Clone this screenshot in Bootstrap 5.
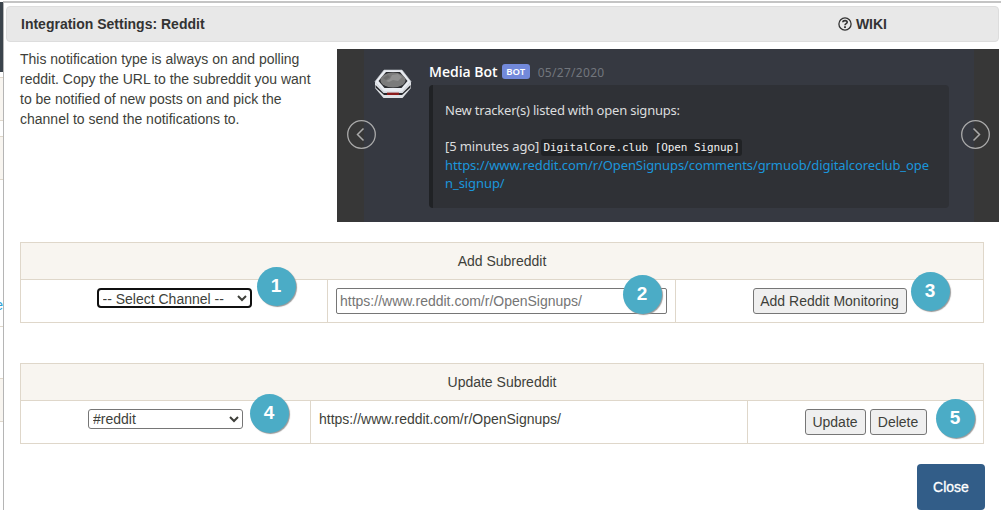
<!DOCTYPE html>
<html lang="en">
<head>
<meta charset="utf-8">
<title>Integration Settings: Reddit</title>
<link rel="stylesheet" href="https://cdn.jsdelivr.net/npm/bootstrap@5.3.0/dist/css/bootstrap.min.css">
<style>
body{font:14px/20px "Liberation Sans",Arial,sans-serif;color:#3e3f3a;height:510px;overflow:hidden;background:#fff}
.behind{width:3px;flex:none;overflow:hidden;padding-top:2px}
.behind i{display:block;border-top:1px solid #dfd7ca}
.behind .nav-edge{height:70px;margin-bottom:5px;background:#3b444c;border:0}
.tint{background:#f8f5f0}
.peek{direction:rtl;color:#2a9fd6;height:20px;white-space:nowrap}
.dialog-pane{border-left:1px solid #b5b5b5;border-top:2px solid #c4c4c4;margin-top:1px;min-width:0}
.title-bar{margin:3px 2px 0;height:36px;border:1px solid #ddd;border-radius:4px;background:#e8e8e8;padding:0 14px;font-weight:700;color:#333}
.wiki-link{margin-right:97px;gap:4px}
.intro{width:317px;flex:none;letter-spacing:0}
.upper{height:173px;margin:7px 2px 0 16px}
.slides{background:#373737;height:173px}
.arrow-col{position:absolute;top:70px;width:31px;height:31px}
.chat{margin:0 25px 0 27px;background:#363941;height:173px;padding:14px 25px 14px 10px;font-family:"Noto Sans","Open Sans",sans-serif;font-size:13px;line-height:18px;color:#dcddde}
.avatar{width:38px;height:30px;margin:6px 17px 0 0;flex:none}
.who{height:18px;margin-bottom:4px}
.bot-name{color:#fff;font:600 14px/18px "Open Sans",sans-serif}
.bot-tag{background:#7289da;color:#fff;font-size:9.5px;font-weight:600;width:28px;height:15px;line-height:15px;border-radius:3px;text-align:center;margin:0 8px 2px 4px}
.when{font-size:12px;color:#72767d;letter-spacing:.3px;padding-top:2px}
.quote-box{background:#2f3136;border-left:4px solid #202225;border-radius:4px;height:123px;padding:16px 0 0 12px;white-space:nowrap;letter-spacing:-.2px}
.quote-box .ago{letter-spacing:-.1px}
.quote-box code{font:11px/16px "DejaVu Sans Mono",monospace;color:#f0f0f0;background:#202225;border-radius:3px;padding:2px;letter-spacing:-.08px;margin-left:-1px}
.quote-box a{color:#1b96db;text-decoration:none;letter-spacing:-.08px}
.grid-table{width:964px;margin:0 0 40px 16px;table-layout:fixed;border-collapse:collapse;color:inherit}
.grid-table>tbody>tr>td,.grid-table>thead>tr>th{border:1px solid #dfd7ca;padding:8px;font-weight:400;position:relative;vertical-align:top}
.grid-table th{background:#f8f5f0!important;height:37px;text-align:center;color:inherit}
.grid-table td{height:43px;color:inherit}
.picker{width:155px;height:20px;border:1px solid #767676;border-radius:3px;background:#fff;color:#3e3f3a;padding:0;display:block;font-size:14px;line-height:18px}
.picker.current{width:155px;border:2px solid #101010;border-radius:4px}
.url-box{width:331px;height:26px;border:1px solid #767676;border-radius:2px;padding:1px 3px;display:block}
.url-box::placeholder{color:#757575;opacity:1}
.plain-btn{height:26px;border:1px solid #767676;border-radius:3px;background:#efefef;color:#3e3f3a;padding:0;line-height:22px}
.step{position:absolute;width:39px;height:39px;border-radius:50%;background:#4bacc6;color:#fff;font-weight:700;font-size:19px;line-height:38px;text-align:center;box-shadow:1px 1px 1px #999;z-index:2;margin-left:-.5px;margin-top:-.5px}
.close-btn{width:68px;height:46px;margin:-20px 16px 0 0;border:0;border-radius:4px;background:#325d88;color:#fff;font-size:14px;font-weight:400;-webkit-text-stroke:.3px #fff}
</style>
</head>
<body>
<div class="d-flex h-100">
  <div class="behind">
    <i class="nav-edge"></i>
    <i class="tint" style="height:43px"></i><i style="height:16px"></i><i class="tint" style="height:43px"></i>
    <i style="height:147px;padding-top:115px"><span class="peek d-block fst-normal">e</span></i>
    <i style="height:52px"></i><i class="tint" style="height:43px"></i><i></i>
  </div>
  <main class="dialog-pane flex-grow-1">
    <header class="title-bar d-flex align-items-center justify-content-between">
      <span>Integration Settings: Reddit</span>
      <span class="wiki-link d-flex align-items-center">
        <svg width="14" height="14" viewBox="0 0 14 14" fill="none" stroke="#333"><circle cx="7" cy="7" r="6.1" stroke-width="1.3"/><path d="M4.8 5.3C5 3 9.2 3 9.2 5.3C9.2 6.7 7 6.6 7 8.3" stroke-width="1.6"/><path d="M7 9.3V11" stroke-width="1.8"/></svg>
        WIKI</span>
    </header>
    <section class="upper d-flex">
      <p class="intro mb-0 text-nowrap">This notification type is always on and polling<br>reddit. Copy the URL to the subreddit you want<br>to be notified of new posts on and pick the<br>channel to send the notifications to.</p>
      <div class="slides position-relative flex-grow-1">
        <svg class="arrow-col" style="left:9px" viewBox="0 0 31 31" fill="none" stroke="#aaa" stroke-width="1.3"><circle cx="15.5" cy="15.5" r="13.8"/><path d="M17.5 9.5L11.5 15.5L17.5 21.5" stroke-width="1.5"/></svg>
        <div class="chat d-flex">
          <svg class="avatar" viewBox="0 0 38 30"><path d="M1 13v6l8.500 10h19L37 19v-6z" fill="#dfe2e6"/><path d="M1.500 16l8 8h19l8-8v2.500L28 26H10l-8.500-7.500z" fill="#28292d"/><path d="M13 23.500h12v2.500H13z" fill="#8c1b1b"/><path d="M10 1h18l9 11.500L28 23H10L1 12.500z" fill="#e9ecf1" stroke="#c3c6cd" stroke-width=".6"/><path d="M12 3h14l7.500 9-6 7h-17l-6-7z" fill="#2b2c30"/><ellipse cx="19" cy="11" rx="12.500" ry="7.600" fill="#7b7b7b"/><path d="M18 6l6-1 4 3-4 4-5-1-4 2-3-1 4-2z" fill="#919191"/><path d="M9 9l5-3 2 2-4 3z" fill="#6c6c6c"/></svg>
          <div class="flex-grow-1">
            <div class="who d-flex align-items-center"><span class="bot-name">Media Bot</span><span class="bot-tag">BOT</span><span class="when">05/27/2020</span></div>
            <div class="quote-box">New tracker(s) listed with open signups:<br><br><span class="ago">[5 minutes ago]</span> <code>DigitalCore.club [Open Signup]</code><br><a href="#">https://www.reddit.com/r/OpenSignups/comments/grmuob/digitalcoreclub_ope<br>n_signup/</a></div>
          </div>
        </div>
        <svg class="arrow-col" style="right:8px" viewBox="0 0 31 31" fill="none" stroke="#aaa" stroke-width="1.3"><circle cx="15.5" cy="15.5" r="13.8"/><path d="M13.500 9.500L19.500 15.500L13.500 21.500" stroke-width="1.5"/></svg>
      </div>
    </section>
    <table class="grid-table" style="margin-top:20px">
      <colgroup><col style="width:307px"><col style="width:348px"><col></colgroup>
      <thead><tr><th colspan="3">Add Subreddit</th></tr></thead>
      <tbody><tr>
        <td><select class="picker current mx-auto"><option>-- Select Channel --</option></select><span class="step" style="left:236px;top:-13px">1</span></td>
        <td><input class="url-box" placeholder="https://www.reddit.com/r/OpenSignups/"><span class="step" style="left:295px;top:-5px">2</span></td>
        <td class="text-center"><button class="plain-btn" style="width:154px">Add Reddit Monitoring</button><span class="step" style="left:235px;top:-8px">3</span></td>
      </tr></tbody>
    </table>
    <table class="grid-table">
      <colgroup><col style="width:290px"><col style="width:437px"><col></colgroup>
      <thead><tr><th colspan="3">Update Subreddit</th></tr></thead>
      <tbody><tr>
        <td><select class="picker mx-auto"><option>#reddit</option></select><span class="step" style="left:229px;top:-7px">4</span></td>
        <td>https://www.reddit.com/r/OpenSignups/</td>
        <td><div class="d-flex justify-content-center gap-1"><button class="plain-btn" style="width:61px">Update</button><button class="plain-btn" style="width:57px">Delete</button></div><span class="step" style="left:188px;top:-2px">5</span></td>
      </tr></tbody>
    </table>
    <div class="d-flex justify-content-end"><button class="close-btn">Close</button></div>
  </main>
</div>
<script src="https://cdn.jsdelivr.net/npm/bootstrap@5.3.0/dist/js/bootstrap.bundle.min.js"></script>
</body>
</html>
